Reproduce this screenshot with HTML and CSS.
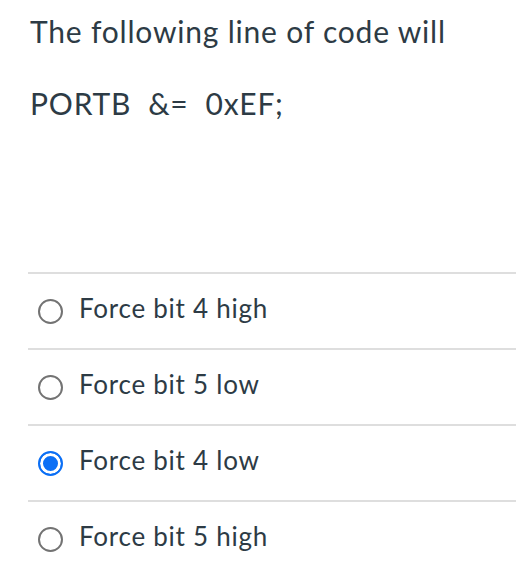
FILE: index.html
```html
<!DOCTYPE html>
<html>
<head>
<meta charset="utf-8">
<link rel="stylesheet" href="styles.css">
</head>
<body>
<div class="question">
  <div class="prompt">
    <p class="line">The following line of code will</p>
    <p class="line">PORTB&nbsp; &amp;=&nbsp; 0xEF;</p>
  </div>
  <ul class="answers">
    <li class="answer"><span class="radio"></span><span class="label">Force bit 4 high</span></li>
    <li class="answer"><span class="radio"></span><span class="label">Force bit 5 low</span></li>
    <li class="answer"><span class="radio checked"></span><span class="label">Force bit 4 low</span></li>
    <li class="answer"><span class="radio"></span><span class="label">Force bit 5 high</span></li>
  </ul>
</div>
</body>
</html>
```
FILE: styles.css
```css
html, body {
  margin: 0;
  padding: 0;
  background: #ffffff;
}
body {
  font-family: Lato, "Open Sans", sans-serif;
  color: #2d3b45;
}
.question {
  padding-left: 28px;
}
.prompt {
  padding-left: 2px;
  padding-top: 13px;
  height: 259px;
}
.line {
  margin: 0 0 36px 0;
  font-size: 30px;
  line-height: 36px;
  letter-spacing: 0.8px;
}
.answers {
  list-style: none;
  margin: 0;
  padding: 0;
}
.answer {
  border-top: 2px solid #dedede;
  height: 74px;
  display: flex;
  align-items: center;
  gap: 16px;
  padding-left: 10px;
}
.radio {
  width: 21px;
  height: 21px;
  border: 2px solid #737373;
  border-radius: 50%;
  flex: none;
  box-sizing: content-box;
}
.radio.checked {
  border-color: #0b6ff5;
  background: #0b6ff5;
  box-shadow: inset 0 0 0 3px #ffffff;
}
.label {
  font-size: 26px;
  line-height: 32px;
  letter-spacing: 0.75px;
  margin-top: -6px;
}
```
